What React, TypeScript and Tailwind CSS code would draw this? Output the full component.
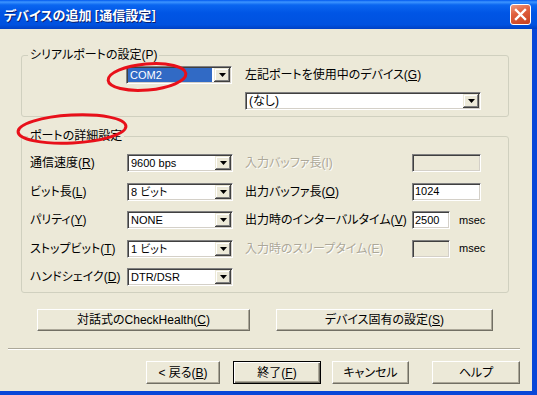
import React from "react";

function Tri() {
  return (
    <svg width="7" height="4" viewBox="0 0 7 4">
      <path d="M0 0H7L3.5 4Z" fill="#000" />
    </svg>
  );
}

function DropBtn() {
  return (
    <div className="w-[16px] h-[14px] shrink-0 bg-[#ece9d8] flex items-center justify-center shadow-[inset_-1px_-1px_0_#404040,inset_1px_1px_0_#ece9d8,inset_-2px_-2px_0_#808080,inset_2px_2px_0_#ffffff]">
      <Tri />
    </div>
  );
}

function Combo({ className, children }: { className: string; children: React.ReactNode }) {
  return (
    <div
      className={
        "h-[18px] bg-white flex items-center p-[1px] border border-t-[#808080] border-l-[#808080] border-b-white border-r-white shadow-[inset_1px_1px_0_#404040,inset_-1px_-1px_0_#d4d0c8] " +
        className
      }
    >
      <div className="flex-1 pl-[2px] text-[11px] leading-[14px] whitespace-nowrap">{children}</div>
      <DropBtn />
    </div>
  );
}

function Edit({ className, value, disabled }: { className: string; value?: string; disabled?: boolean }) {
  return (
    <div
      className={
        "h-[18px] flex items-center pl-[2px] text-[11px] border border-t-[#808080] border-l-[#808080] border-b-white border-r-white shadow-[inset_1px_1px_0_#404040,inset_-1px_-1px_0_#d4d0c8] " +
        (disabled ? "bg-[#ece9d8] " : "bg-white ") +
        className
      }
    >
      {value}
    </div>
  );
}

function Btn({ className, children, def }: { className: string; children: React.ReactNode; def?: boolean }) {
  return (
    <div
      className={
        "flex items-center justify-center bg-[#ece9d8] whitespace-nowrap " +
        (def
          ? "border border-black shadow-[inset_1px_1px_0_#ffffff,inset_-1px_-1px_0_#716f64,inset_-2px_-2px_0_#aca899] "
          : "border border-t-white border-l-white border-r-[#716f64] border-b-[#716f64] shadow-[inset_-1px_-1px_0_#aca899] ") +
        className
      }
    >
      {children}
    </div>
  );
}

const dis = "text-[#aca899] [text-shadow:1px_1px_0_#ffffff]";

export default function App() {
  return (
    <div className="relative w-[537px] h-[395px] flex flex-col bg-[#0846d8] overflow-hidden font-['Liberation_Sans','Noto_Sans_CJK_JP',sans-serif] [font-feature-settings:'palt'] text-[12px] text-black">
      {/* title bar */}
      <div className="h-[29px] shrink-0 flex items-center justify-between pl-[4px] pr-[6px] bg-[linear-gradient(180deg,#0058ee_0%,#3d95ff_7%,#0a66f0_17%,#0055e5_45%,#0052e0_85%,#0041c4_100%)]">
        <div className="text-white font-bold text-[13px] leading-[16px] [text-shadow:1px_1px_0_#0a1e6e] font-['Noto_Sans_CJK_JP',sans-serif]">
          デバイスの追加 [通信設定]
        </div>
        <div className="w-[21px] h-[21px] rounded-[3px] border border-white flex items-center justify-center bg-[linear-gradient(160deg,#f09a80_0%,#e0603e_40%,#c8401f_100%)]">
          <svg width="13" height="13" viewBox="0 0 13 13">
            <path d="M2 2L11 11M11 2L2 11" stroke="#fff" strokeWidth="2.4" strokeLinecap="square" />
          </svg>
        </div>
      </div>

      {/* body */}
      <div className="flex-1 mr-[5px] mb-[4px] bg-[#ece9d8] flex flex-col">
        {/* group 1 */}
        <fieldset className="ml-[21px] mt-[19px] w-[488px] border border-[#d0d0bf] rounded-[3px]">
          <legend className="ml-[6px] px-[2px] leading-[14px]">シリアルポートの設定(P)</legend>
          <div className="flex items-start pl-[104px] pt-[4px] pb-[6px]">
            <div className="w-[106px] h-[18px] bg-white flex items-center p-[1px] border border-t-[#808080] border-l-[#808080] border-b-white border-r-white shadow-[inset_1px_1px_0_#404040,inset_-1px_-1px_0_#d4d0c8]">
              <div className="flex-1 h-[14px] mr-[2px] bg-[#316ac5] text-white text-[11px] leading-[14px] pl-[2px]">COM2</div>
              <DropBtn />
            </div>
            <div className="ml-[13px] flex flex-col gap-[8px]">
              <div className="h-[18px] flex items-center">
                左記ポートを使用中のデバイス(<u>G</u>)
              </div>
              <Combo className="w-[236px]">
                <span className="text-[12px]">(なし)</span>
              </Combo>
            </div>
          </div>
        </fieldset>

        {/* group 2 */}
        <fieldset className="ml-[21px] mt-[12px] w-[488px] border border-[#d0d0bf] rounded-[3px]">
          <legend className="ml-[6px] px-[2px] leading-[14px]">ポートの詳細設定</legend>
          <div className="flex flex-col gap-[10.5px] pl-[8px] pt-[11px] pb-[6px]">
            <div className="flex items-center h-[18px]">
              <div className="w-[97px]">通信速度(<u>R</u>)</div>
              <Combo className="w-[106px]">9600 bps</Combo>
              <div className={"ml-[12px] w-[167px] " + dis}>入力バッファ長(I)</div>
              <Edit className="w-[69px]" disabled />
            </div>
            <div className="flex items-center h-[18px]">
              <div className="w-[97px]">ビット長(<u>L</u>)</div>
              <Combo className="w-[106px]">8 ビット</Combo>
              <div className="ml-[12px] w-[167px]">出力バッファ長(<u>O</u>)</div>
              <Edit className="w-[69px]" value="1024" />
            </div>
            <div className="flex items-center h-[18px]">
              <div className="w-[97px]">パリティ(<u>Y</u>)</div>
              <Combo className="w-[106px]">NONE</Combo>
              <div className="ml-[12px] w-[167px]">出力時のインターバルタイム(<u>V</u>)</div>
              <Edit className="w-[38px]" value="2500" />
              <div className="ml-[9px] text-[11px]">msec</div>
            </div>
            <div className="flex items-center h-[18px]">
              <div className="w-[97px]">ストップビット(<u>T</u>)</div>
              <Combo className="w-[106px]">1 ビット</Combo>
              <div className={"ml-[12px] w-[167px] " + dis}>入力時のスリープタイム(E)</div>
              <Edit className="w-[38px]" disabled />
              <div className="ml-[9px] text-[11px]">msec</div>
            </div>
            <div className="flex items-center h-[18px]">
              <div className="w-[97px]">ハンドシェイク(<u>D</u>)</div>
              <Combo className="w-[106px]">DTR/DSR</Combo>
            </div>
          </div>
        </fieldset>

        {/* action buttons */}
        <div className="flex mt-[16px]">
          <Btn className="ml-[37px] w-[213px] h-[22px]">
            対話式のCheckHealth(<u>C</u>)
          </Btn>
          <Btn className="ml-[26px] w-[217px] h-[22px]">
            デバイス固有の設定(<u>S</u>)
          </Btn>
        </div>

        {/* separator */}
        <div className="mt-[17px] ml-[8px] w-[512px] h-[2px] border-t border-t-[#aca899] border-b border-b-white" />

        {/* wizard buttons */}
        <div className="flex mt-[11px]">
          <Btn className="ml-[146px] w-[74px] h-[23px]">
            &lt; 戻る(<u>B</u>)
          </Btn>
          <Btn def className="ml-[13px] w-[88px] h-[23px]">
            終了(<u>F</u>)
          </Btn>
          <Btn className="ml-[11px] w-[77px] h-[23px]">キャンセル</Btn>
          <Btn className="ml-[23px] w-[88px] h-[23px]">ヘルプ</Btn>
        </div>
      </div>

      {/* red annotation ellipses */}
      <svg className="absolute inset-0 pointer-events-none" width="537" height="395" viewBox="0 0 537 395">
        <ellipse cx="147" cy="77" rx="39" ry="13" transform="rotate(-5 147 77)" fill="none" stroke="#e8101a" strokeWidth="3" />
        <ellipse cx="72" cy="129" rx="54" ry="14" transform="rotate(-3 72 129)" fill="none" stroke="#e8101a" strokeWidth="3" />
      </svg>
    </div>
  );
}
